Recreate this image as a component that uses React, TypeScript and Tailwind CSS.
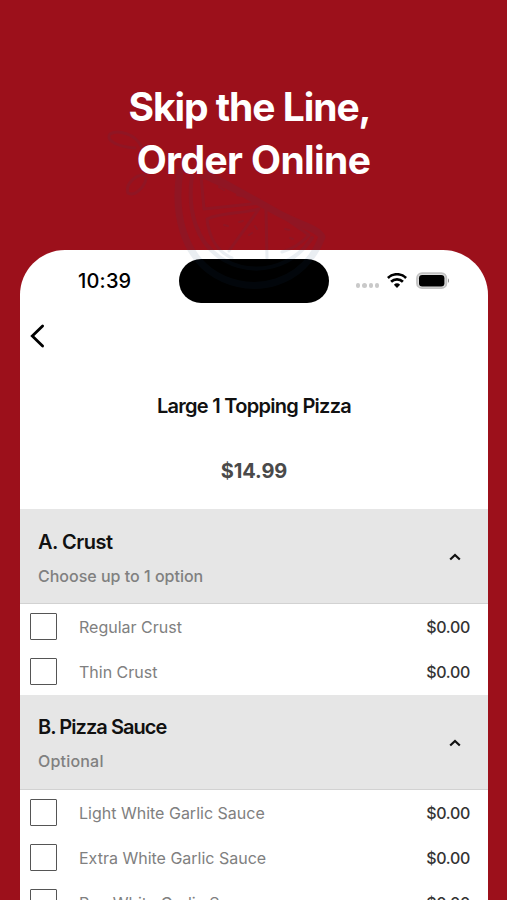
type Option = {
    name: string;
    price: string;
};

type SectionProps = {
    title: string;
    titleClass: string;
    hint: string;
    hintClass: string;
    options: Option[];
};

const crusts: Option[] = [
    {name: "Regular Crust", price: "$0.00"},
    {name: "Thin Crust", price: "$0.00"},
];

const sauces: Option[] = [
    {name: "Light White Garlic Sauce", price: "$0.00"},
    {name: "Extra White Garlic Sauce", price: "$0.00"},
    {name: "Reg White Garlic Sauce", price: "$0.00"},
];

const StatusBar = () => (
    <div className="flex h-[62px] items-center">
        <span className="ml-[58px] w-[101px] text-[20px] font-medium tracking-[0.2px] text-black">10:39</span>
        <div className="h-[44px] w-[150px] rounded-full bg-black"/>
        <div className="ml-[27px] mt-[9px] flex gap-[2.2px]">
            {[0, 1, 2, 3].map((dot) => (
                <span key={dot} className="size-[4.2px] rounded-full bg-[#c9c9c9]"/>
            ))}
        </div>
        <svg className="-mt-[2px] ml-[8px]" width="20" height="15" viewBox="0 0 20 15" fill="none" stroke="#000" strokeWidth="2.7">
            <path d="M.9 4.9a13.2 13.2 0 0 1 18.2 0"/>
            <path d="M4.1 8.7a8.5 8.5 0 0 1 11.8 0"/>
            <path d="M10 14.9 6.9 11.8a4.5 4.5 0 0 1 6.2 0z" fill="#000" stroke="none"/>
        </svg>
        <svg className="ml-[9px]" width="34" height="18" viewBox="0 0 34 18">
            <rect x="1" y="1.2" width="29.4" height="15" rx="5" fill="#ddd" stroke="#c2c2c2" strokeWidth="1.8"/>
            <rect x="3" y="3" width="25.4" height="11.4" rx="3.2" fill="#000"/>
            <path d="M32 6.4c1.3.5 1.3 3.9 0 4.4z" fill="#888"/>
        </svg>
    </div>
);

const OptionRow = ({name, price}: Option) => (
    <div className="flex h-[45.3px] items-center pl-[10px] pr-[18px]">
        <span className="size-[27px] shrink-0 rounded-[1px] border-[1.5px] border-[#555] bg-white"/>
        <span className="ml-[22px] flex-1 pt-px text-[16px] text-[#808080]">{name}</span>
        <span className="pt-px text-[16px] font-medium tracking-[-0.3px] text-[#333]">{price}</span>
    </div>
);

const Section = ({title, titleClass, hint, hintClass, options}: SectionProps) => (
    <section>
        <header className="flex h-[95px] items-center justify-between border-b border-[#d2d2d2] bg-[#e6e6e6] pl-[18px] pr-[27px] pt-[2px]">
            <div>
                <h2 className={`text-[20px] leading-[26px] font-semibold text-[#111] ${titleClass}`}>{title}</h2>
                <p className={`mt-[11px] text-[16px] leading-[20px] font-medium text-[#808080] ${hintClass}`}>{hint}</p>
            </div>
            <svg width="12" height="8" viewBox="0 0 12 8" fill="none" stroke="#111" strokeWidth="2.2">
                <path d="M1.2 6.5 6 2l4.8 4.5"/>
            </svg>
        </header>
        {options.map((option) => (
            <OptionRow key={option.name} {...option}/>
        ))}
    </section>
);

// Faint lemon slice with two leaves, laid over the headline and the phone
const LemonMark = () => (
    <svg
        className="pointer-events-none absolute left-[100px] top-[125px] opacity-[0.09]"
        width="240"
        height="185"
        viewBox="100 125 240 185"
        fill="none"
        stroke="#1f4a78"
        strokeWidth="3"
        strokeLinejoin="round"
        strokeLinecap="round"
    >
        <path d="M141 146c-6-12-23-17-31-12-5 7 9 13 25 14M145 175c-10-1-20 10-17 18 6 4 16-5 18-14"/>
        <path strokeWidth="7" d="M180 172c-7 42 4 84 36 103 38 22 88 9 106-38C318 228 300 225 278 213L208 174"/>
        <path strokeWidth="4" d="M192 176c-5 34 4 68 32 84 31 17 68 8 88-22"/>
        <path d="M201 176l3 33 56-6zM232 258c-14-6-23-20-25-39 16-7 34-5 52-10l-30 42M266 209l1 49M272 209l37 26c-8 9-17 14-27 17"/>
        <path strokeWidth="2" d="M219 187l5 3M237 195l4 1M224 225l4 1M239 222l4-1M255 226l2 3M249 235l3-2M285 229l4 1M290 238l3 1"/>
    </svg>
);

const App = () => {
    return (
        <div className="relative flex h-[900px] w-[507px] flex-col overflow-hidden bg-[#9c101b] font-['Inter','Liberation_Sans',sans-serif]">
            <h1 className="flex h-[250px] flex-col items-center pt-[80px] text-[39px] leading-[53px] font-bold text-white">
                <span className="-ml-[8px] whitespace-nowrap tracking-[-1.05px]">Skip the Line,</span>
                <span className="whitespace-nowrap tracking-[-0.6px]">Order Online</span>
            </h1>
            <main className="ml-[20px] h-[650px] w-[468px] overflow-hidden rounded-t-[45px] bg-white">
                <StatusBar/>
                <div className="flex h-[48px] items-center pl-[10px]">
                    <svg width="16" height="24" viewBox="0 0 16 24" fill="none" stroke="#000" strokeWidth="2.8" strokeLinecap="round">
                        <path d="M12.6 2 2.3 12 12.6 22"/>
                    </svg>
                </div>
                <div className="flex h-[149px] flex-col items-center pt-[33px]">
                    <h2 className="text-[20px] leading-[26px] font-semibold tracking-[-0.72px] text-[#111]">Large 1 Topping Pizza</h2>
                    <p className="mt-[39px] text-[20px] leading-[26px] font-bold tracking-[-0.1px] text-[#4a4a4a]">$14.99</p>
                </div>
                <Section
                    title="A. Crust"
                    titleClass="tracking-[-0.5px]"
                    hint="Choose up to 1 option"
                    hintClass="tracking-[0px]"
                    options={crusts}
                />
                <Section
                    title="B. Pizza Sauce"
                    titleClass="tracking-[-0.95px]"
                    hint="Optional"
                    hintClass="tracking-[0.2px]"
                    options={sauces}
                />
            </main>
            <LemonMark/>
        </div>
    );
};

export default App;
